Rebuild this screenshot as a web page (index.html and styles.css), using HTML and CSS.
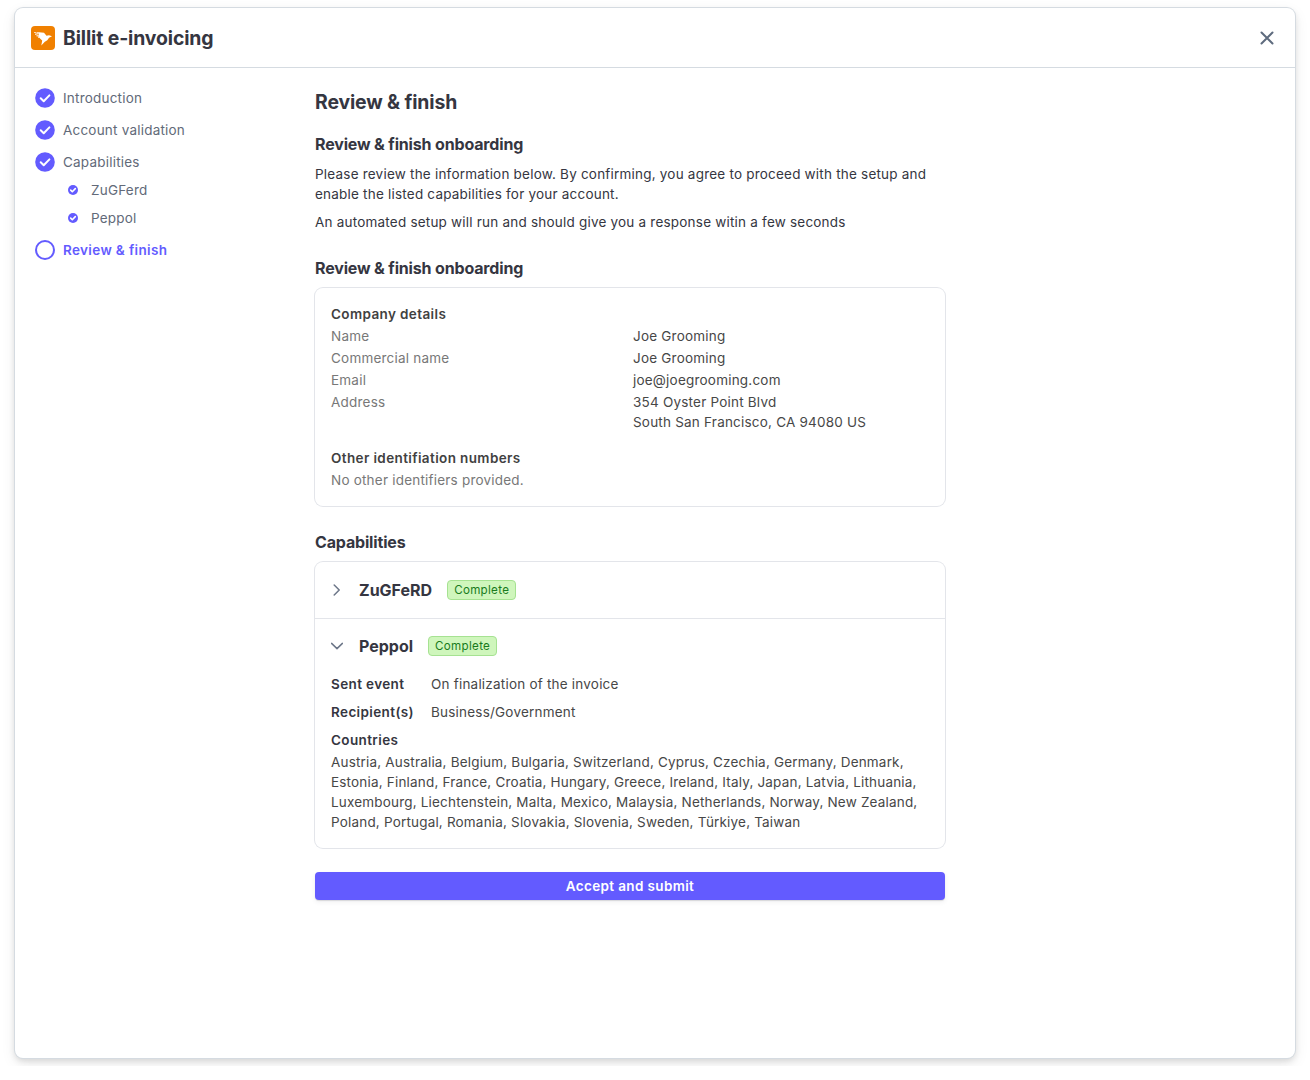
FILE: index.html
```
<!DOCTYPE html>
<html lang="en">
<head>
  <meta charset="UTF-8">
  <title>Billit e-invoicing</title>
  <meta name="viewport" content="width=device-width, initial-scale=1.0">
  <link rel="stylesheet" href="styles.css">
</head>
<body>
  <div class="modal">
    <header class="modal-header">
      <svg class="logo" viewBox="0 0 24 24">
        <rect width="24" height="24" rx="4" fill="#f08000"/>
        <path fill="#fff" d="M8 6.300L13 6.800l2.500 3 2.500-.500 3 .900-3 1.600c-1 2.100-2.300 3-4.200 4L10.300 19.500l.900-4.900L9 12.500 8 10.500z"/>
        <path fill="#fff" opacity=".7" d="M3 6h2v1H3zM5.500 6H8v2H5.500zM4 7.500h1.500V9H4zM5.500 8.500H8v2H5.500zM7 10.500h2v1.500H7z"/>
      </svg>
      <h1>Billit e-invoicing</h1>
      <button class="close-btn" aria-label="Close">
        <svg viewBox="0 0 14 14" width="14" height="14"><path d="M1.500 1.500l11 11M12.500 1.500l-11 11"/></svg>
      </button>
    </header>

    <div class="modal-body">
      <nav class="steps">
        <div class="step">
          <svg class="step-icon" viewBox="0 0 20 20"><circle cx="10" cy="10" r="9.800"/><path d="M5.700 10.300l3 2.900 5.700-5.800"/></svg>
          <span>Introduction</span>
        </div>
        <div class="step">
          <svg class="step-icon" viewBox="0 0 20 20"><circle cx="10" cy="10" r="9.800"/><path d="M5.700 10.300l3 2.900 5.700-5.800"/></svg>
          <span>Account validation</span>
        </div>
        <div class="step">
          <svg class="step-icon" viewBox="0 0 20 20"><circle cx="10" cy="10" r="9.800"/><path d="M5.700 10.300l3 2.900 5.700-5.800"/></svg>
          <span>Capabilities</span>
        </div>
        <div class="step substep">
          <svg class="step-icon" viewBox="0 0 20 20"><circle cx="10" cy="10" r="10"/><path d="M5.400 10.300l3.200 3.100 6-6.200"/></svg>
          <span>ZuGFerd</span>
        </div>
        <div class="step substep">
          <svg class="step-icon" viewBox="0 0 20 20"><circle cx="10" cy="10" r="10"/><path d="M5.400 10.300l3.200 3.100 6-6.200"/></svg>
          <span>Peppol</span>
        </div>
        <div class="step current">
          <svg class="step-icon" viewBox="0 0 20 20"><circle cx="10" cy="10" r="9"/></svg>
          <span>Review &amp; finish</span>
        </div>
      </nav>

      <main class="content">
        <h2>Review &amp; finish</h2>

        <section class="intro">
          <h3>Review &amp; finish onboarding</h3>
          <p>Please review the information below. By confirming, you agree to proceed with the setup and enable the listed capabilities for your account.</p>
          <p>An automated setup will run and should give you a response witin a few seconds</p>
        </section>

        <section class="block">
          <h3>Review &amp; finish onboarding</h3>
          <div class="card company">
            <h4>Company details</h4>
            <dl class="details">
              <dt>Name</dt><dd>Joe Grooming</dd>
              <dt>Commercial name</dt><dd>Joe Grooming</dd>
              <dt>Email</dt><dd>joe@joegrooming.com</dd>
              <dt>Address</dt><dd>354 Oyster Point Blvd<br>South San Francisco, CA 94080 US</dd>
            </dl>
            <h4 class="other">Other identifiation numbers</h4>
            <p class="muted">No other identifiers provided.</p>
          </div>
        </section>

        <section class="block">
          <h3>Capabilities</h3>
          <div class="card">
            <div class="capability">
              <svg class="chevron" viewBox="0 0 12 12"><path d="M3.200 1l5 5-5 5"/></svg>
              <h3>ZuGFeRD</h3>
              <span class="badge">Complete</span>
            </div>
            <div class="capability open">
              <svg class="chevron" viewBox="0 0 12 12"><path d="M.600 3.400L6 8.600l5.400-5.200"/></svg>
              <h3>Peppol</h3>
              <span class="badge">Complete</span>
            </div>
            <div class="capability-body">
              <div class="row"><b>Sent event</b><span>On finalization of the invoice</span></div>
              <div class="row"><b>Recipient(s)</b><span>Business/Government</span></div>
              <b>Countries</b>
              <p class="countries">Austria, Australia, Belgium, Bulgaria, Switzerland, Cyprus, Czechia, Germany, Denmark, Estonia, Finland, France, Croatia, Hungary, Greece, Ireland, Italy, Japan, Latvia, Lithuania, Luxembourg, Liechtenstein, Malta, Mexico, Malaysia, Netherlands, Norway, New Zealand, Poland, Portugal, Romania, Slovakia, Slovenia, Sweden, Türkiye, Taiwan</p>
            </div>
          </div>
        </section>

        <button class="submit-btn">Accept and submit</button>
      </main>
    </div>
  </div>
</body>
</html>
```
FILE: styles.css
```
* {
  box-sizing: border-box;
}

body {
  margin: 0;
  padding: 8px 15px;
  background: #fff;
  color: #353641;
  font-family: Inter, 'Liberation Sans', sans-serif;
  font-size: 13.5px;
  line-height: 20px;
  letter-spacing: 0.21px;
}

h1, h2, h3, h4, p, dl, dd {
  margin: 0;
}

button {
  font: inherit;
  border: none;
  padding: 0;
  cursor: pointer;
}

.modal {
  height: 1050px;
  background: #fff;
  border-radius: 8px;
  box-shadow: 0 0 0 1px #d5dbe1, 0 3px 6px rgba(0, 0, 0, 0.12), 0 5px 15px rgba(0, 0, 0, 0.08);
}

.modal-header {
  display: flex;
  align-items: center;
  gap: 8px;
  height: 60px;
  padding: 0 16px;
  border-bottom: 1px solid #d5dbe1;
}

.logo {
  width: 24px;
  height: 24px;
}

h1, h2 {
  font-size: 19.4px;
  line-height: 28px;
  font-weight: 700;
  letter-spacing: -0.12px;
}

.close-btn {
  display: flex;
  align-items: center;
  justify-content: center;
  width: 24px;
  height: 24px;
  margin-left: auto;
  background: none;
}

.close-btn path {
  stroke: #5e6b7e;
  stroke-width: 2;
  stroke-linecap: round;
}

.modal-body {
  display: flex;
}

.steps {
  width: 300px;
  padding: 14px 20px;
}

.step {
  display: flex;
  align-items: center;
  gap: 8px;
  height: 32px;
  color: #626a79;
}

.step-icon {
  width: 20px;
  height: 20px;
  fill: #635bff;
}

.step-icon path {
  fill: none;
  stroke: #fff;
  stroke-width: 2;
  stroke-linecap: round;
  stroke-linejoin: round;
}

.substep {
  height: 28px;
  padding-left: 33px;
  gap: 13px;
}

.substep:nth-child(4) {
  margin-top: -2px;
}

.substep .step-icon {
  width: 10px;
  height: 10px;
}

.substep .step-icon path {
  stroke-width: 3.2;
}

.current {
  margin-top: 2px;
  color: #635bff;
  font-weight: 600;
  letter-spacing: 0.36px;
}

.current .step-icon {
  fill: none;
  stroke: #635bff;
  stroke-width: 2;
}

.content {
  width: 630px;
  padding-top: 20px;
}

h3 {
  font-size: 16px;
  line-height: 24px;
  font-weight: 700;
  letter-spacing: -0.16px;
}

.intro {
  margin-top: 16px;
}

.intro p {
  margin-top: 8px;
}

.block {
  margin-top: 24px;
}

.card {
  margin-top: 8px;
  border-radius: 8px;
  box-shadow: 0 0 0 1px #e3e5ea;
}

.company {
  padding: 16px;
}

h4 {
  font-size: 13.5px;
  font-weight: 600;
  letter-spacing: 0.38px;
  color: #414141;
}

.details {
  display: grid;
  grid-template-columns: 302px 1fr;
  row-gap: 2px;
  margin-top: 2px;
}

.details dt, .muted {
  color: #787878;
}

.details dd, .row span, .countries {
  color: #474747;
}

.other {
  margin-top: 16px;
}

.muted {
  margin-top: 2px;
}

.capability {
  display: flex;
  align-items: center;
  height: 56px;
  padding: 0 16px;
}

.capability h3 {
  letter-spacing: 0;
}

.capability.open {
  padding-bottom: 1px;
  border-top: 1px solid #e3e5ea;
}

.chevron {
  width: 12px;
  height: 12px;
  margin-right: 16px;
  fill: none;
  stroke: #6c7688;
  stroke-width: 1.5;
  stroke-linecap: round;
  stroke-linejoin: round;
}

.badge {
  height: 20px;
  margin-left: 15px;
  padding: 0 6px;
  border: 1px solid #a6e292;
  border-radius: 4px;
  background: #cff6bc;
  color: #197b1d;
  font-size: 11.6px;
  line-height: 18px;
  letter-spacing: 0.3px;
}

.capability-body {
  padding: 0 16px 16px;
}

b {
  display: block;
  font-weight: 600;
  letter-spacing: 0.38px;
}

.row {
  display: flex;
  margin-bottom: 8px;
}

.row b {
  width: 100px;
}

.countries {
  margin-top: 2px;
  letter-spacing: 0.185px;
}

.submit-btn {
  display: block;
  width: 100%;
  height: 28px;
  margin-top: 24px;
  border-radius: 4px;
  background: #635bff;
  box-shadow: 0 1px 1px rgba(0, 0, 0, 0.12), 0 2px 5px rgba(60, 66, 87, 0.08);
  color: #fff;
  font-weight: 600;
  letter-spacing: 0.36px;
}
```
